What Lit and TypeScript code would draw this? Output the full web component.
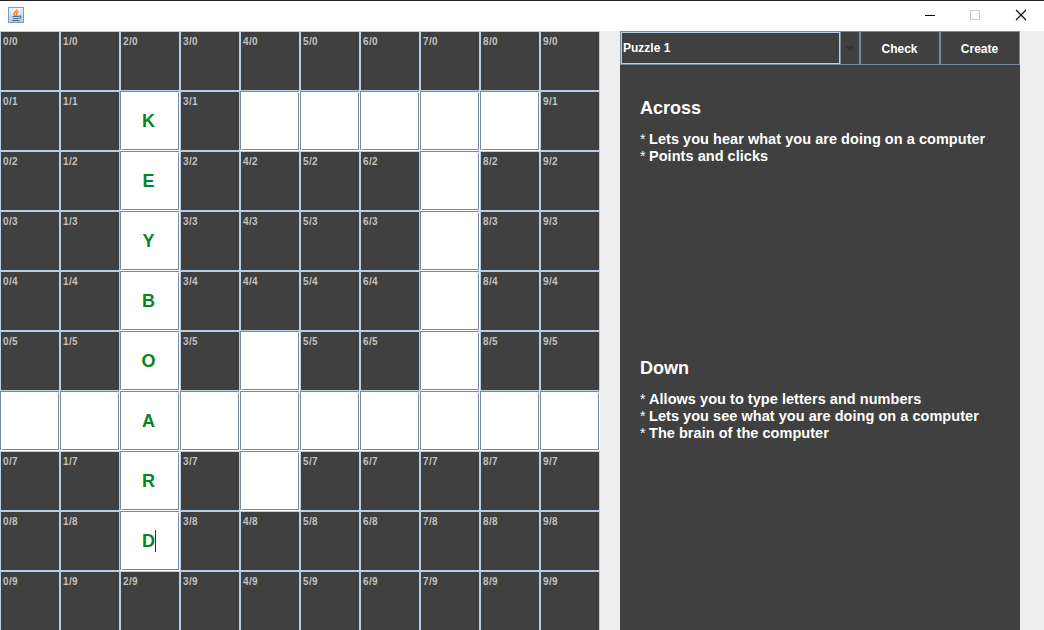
import { LitElement, html, css } from "lit";
import { customElement, property } from "lit/decorators.js";

const GRID = [
  "##########",
  "##K#     #",
  "##E#### ##",
  "##Y#### ##",
  "##B#### ##",
  "##O# ## ##",
  "  A       ",
  "##R# #####",
  "##D#######",
  "##########",
];

@customElement("title-bar")
class TitleBar extends LitElement {
  static styles = css`
    :host { display: flex; box-sizing: border-box; height: 31px; background: #fff; border-top: 1px solid #242226; justify-content: space-between; }
    .logo { display: block; margin: 6px 0 0 8px; }
    .controls { display: flex; }
    .control { display: block; }
  `;
  render() {
    return html`
      <svg class="logo" width="16" height="16" viewBox="0 0 16 16">
        <defs><linearGradient id="g" x1="0" y1="0" x2="0" y2="1"><stop offset="0" stop-color="#f4f7fa"/><stop offset="1" stop-color="#b4c8da"/></linearGradient></defs>
        <rect x=".5" y=".5" width="15" height="15" fill="url(#g)" stroke="#7f9db8"/>
        <path d="M9 2.500C9 4.500 5.500 5 6 7c.2 1 1.200 1.500 1.500 2M10.500 4.500C8 5.500 8 6.500 8.700 7.500c.4.600.2 1.200-.2 1.500" fill="none" stroke="#ee7d20" stroke-width="1.300"/>
        <path d="M4.500 9.500h6.500M5 11.500h5.500M4 13.500h7.500M11 9.300c2.200-1 2.700 1.200.3 2.200" fill="none" stroke="#3f6f9c" stroke-width="1.100"/>
      </svg>
      <div class="controls">
        <svg class="control" width="46" height="30"><path d="M19 14.500h10" stroke="#000"/></svg>
        <svg class="control" width="46" height="30"><rect x="18.500" y="9.500" width="9" height="9" fill="none" stroke="#ccc"/></svg>
        <svg class="control" width="46" height="30"><path d="M18 9l10 10M28 9L18 19" stroke="#000" stroke-width="1.100"/></svg>
      </div>`;
  }
}

@customElement("crossword-grid")
class CrosswordGrid extends LitElement {
  static styles = css`
    :host { display: grid; grid-template-columns: repeat(10, 60px); grid-auto-rows: 60px; width: 600px; }
    .block { box-sizing: border-box; border: 1px solid #b8cfe5; background: #404040; color: #c0c0c0; font-size: 10px; font-weight: bold; line-height: 12px; letter-spacing: 0.35px; padding: 4px 2px; }
    .entry {
      display: flex; align-items: center; justify-content: center; box-sizing: border-box; padding: 0 3px 1px 0;
      color: #058522; font-size: 18px; font-weight: bold; line-height: 20px;
      background:
        linear-gradient(#eee, #eee) 1px 58px / 1px 1px,
        linear-gradient(#eee, #eee) 0 59px / 1px 1px,
        linear-gradient(#eee, #eee) 58px 1px / 1px 1px,
        linear-gradient(#eee, #eee) 59px 0 / 1px 1px,
        linear-gradient(#7a8a99, #7a8a99) 0 0 / 59px 1px,
        linear-gradient(#7a8a99, #7a8a99) 0 0 / 1px 59px,
        linear-gradient(#7a8a99, #7a8a99) 58px 0 / 1px 59px,
        linear-gradient(#7a8a99, #7a8a99) 0 58px / 59px 1px,
        #fff;
      background-repeat: no-repeat;
    }
    .caret { width: 1px; height: 22px; background: #333; margin: 0 -1px 0 0; }
  `;
  render() {
    return GRID.map((row, y) => [...row].map((c, x) =>
      c === "#"
        ? html`<div class="block">${x}/${y}</div>`
        : html`<div class="entry">${c.trim()}${c === "D" ? html`<span class="caret"></span>` : ""}</div>`));
  }
}

@customElement("clue-list")
class ClueList extends LitElement {
  @property() heading = "";
  @property({ attribute: false }) clues: string[] = [];
  static styles = css`
    :host { display: block; box-sizing: border-box; height: 260px; padding: 32px 20px 0; color: #fff; font-weight: bold; }
    .heading { font-size: 18px; line-height: 22px; margin-bottom: 12px; }
    .clue { display: flex; height: 17px; font-size: 14.49px; line-height: 17px; letter-spacing: 0.05px; white-space: nowrap; }
    .star { width: 9px; font-size: 14px; font-weight: normal; }
  `;
  render() {
    return html`<div class="heading">${this.heading}</div>
      ${this.clues.map((c) => html`<div class="clue"><span class="star">*</span><span class="text">${c}</span></div>`)}`;
  }
}

@customElement("app-root")
class AppRoot extends LitElement {
  static styles = css`
    :host { display: block; width: 1044px; height: 630px; overflow: hidden; background: #eee; font-family: "Liberation Sans", Arial, sans-serif; }
    .content { display: flex; gap: 20px; height: 599px; overflow: hidden; }
    .panel { width: 400px; height: 599px; background: #404040; }
    .toolbar { display: grid; grid-template: 34px / 240px 80px 80px; height: 34px; color: #fff; font-size: 12px; font-weight: bold; }
    .select, .button { box-sizing: border-box; border: 1px solid #7a8a99; }
    .select { display: flex; }
    .value { box-sizing: border-box; width: 219px; border: 1px solid #b8cfe5; padding: 0 1px; line-height: 30px; }
    .arrow { box-sizing: border-box; width: 19px; border-left: 1px solid #7a8a99; }
    .glyph { display: block; }
    .button { line-height: 34px; text-align: center; padding-right: 1px; }
  `;
  render() {
    return html`
      <title-bar></title-bar>
      <div class="content">
        <crossword-grid></crossword-grid>
        <div class="panel">
          <div class="toolbar">
            <div class="select"><div class="value">Puzzle 1</div><div class="arrow"><svg class="glyph" width="18" height="32"><path d="M4 14h10l-5 5z" fill="#333"/></svg></div></div>
            <div class="button">Check</div>
            <div class="button">Create</div>
          </div>
          <clue-list heading="Across" .clues=${["Lets you hear what you are doing on a computer", "Points and clicks"]}></clue-list>
          <clue-list heading="Down" .clues=${["Allows you to type letters and numbers", "Lets you see what you are doing on a computer", "The brain of the computer"]}></clue-list>
        </div>
      </div>`;
  }
}
